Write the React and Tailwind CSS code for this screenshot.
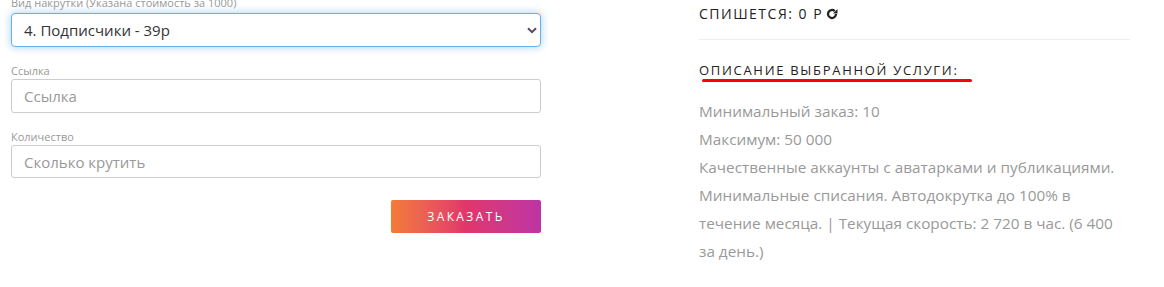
import { useState } from 'react';

const RefreshIcon = () => (
    <svg width="12" height="12" viewBox="0 0 24 24" className="inline-block ml-[3px] -mt-[3px]">
        <path d="M20 12a8 8 0 1 1-2.6-5.9" fill="none" stroke="#222" strokeWidth="4.5" />
        <path d="M23 2v9h-9z" fill="#222" />
    </svg>
);

const App = () => {
    const [service, setService] = useState('4');

    return (
        <div className="w-[1164px] h-[287px] bg-white overflow-hidden flex font-['Open_Sans',sans-serif]">
            {/* left: order form */}
            <div className="w-[552px] pl-[11px] pr-[11px] -mt-[5px]">
                <label className="block text-[11px] leading-[16px] text-[#999]">Вид накрутки (Указана стоимость за 1000)</label>
                <div className="relative mt-[2px]">
                    <select
                        value={service}
                        onChange={(e) => setService(e.target.value)}
                        className="w-full h-[34px] appearance-none rounded-[4px] border border-[#66afe9] shadow-[0_0_8px_rgba(102,175,233,0.6)] pl-[12px] text-[15px] text-[#333] outline-none bg-white"
                    >
                        <option value="4">4. Подписчики - 39р</option>
                    </select>
                    <svg width="10" height="7" viewBox="0 0 10 7" className="absolute right-[4px] top-[14px] pointer-events-none">
                        <path d="M1 1.2l4 4 4-4" fill="none" stroke="#5b4a5e" strokeWidth="2" />
                    </svg>
                </div>

                <label className="block mt-[16px] text-[11px] leading-[16px] text-[#999]">Ссылка</label>
                <input
                    type="text"
                    placeholder="Ссылка"
                    className="block w-full h-[34px] rounded-[3px] border border-[#ccc] pl-[12px] text-[15px] text-[#555] placeholder-[#999] outline-none"
                />

                <label className="block mt-[16px] text-[11px] leading-[16px] text-[#999]">Количество</label>
                <input
                    type="text"
                    placeholder="Сколько крутить"
                    className="block w-full h-[33px] rounded-[3px] border border-[#ccc] pl-[12px] text-[15px] text-[#555] placeholder-[#999] outline-none"
                />

                <div className="flex justify-end mt-[22px]">
                    <button className="w-[150px] h-[33px] rounded-[2px] bg-gradient-to-r from-[#f47a35] via-[#e0366a] to-[#bd33a5] text-white text-[12px] tracking-[2.4px]">
                        ЗАКАЗАТЬ
                    </button>
                </div>
            </div>

            {/* right: summary */}
            <div className="ml-[147px] w-[431px]">
                <div className="mt-[4px] text-[14px] leading-[19px] tracking-[1.5px] text-[#222]">
                    СПИШЕТСЯ: 0 Р<RefreshIcon />
                </div>
                <hr className="mt-[16px] border-t border-[#eee]" />
                <div className="mt-[21px] inline-block text-[13px] leading-[18px] tracking-[1.7px] text-[#222]">
                    ОПИСАНИЕ ВЫБРАННОЙ УСЛУГИ:
                    <div className="h-[3px] bg-[#f00] rounded-full ml-[3px] w-[270px]"></div>
                </div>
                <div className="mt-[15px] text-[15.3px] leading-[28px] text-[#999]">
                    <div>Минимальный заказ: 10</div>
                    <div>Максимум: 50 000</div>
                    <div>
                        Качественные аккаунты с аватарками и публикациями. Минимальные списания. Автодокрутка до 100% в течение месяца. | Текущая скорость: 2 720 в час. (6 400 за день.)
                    </div>
                </div>
            </div>
        </div>
    );
};

export default App;
